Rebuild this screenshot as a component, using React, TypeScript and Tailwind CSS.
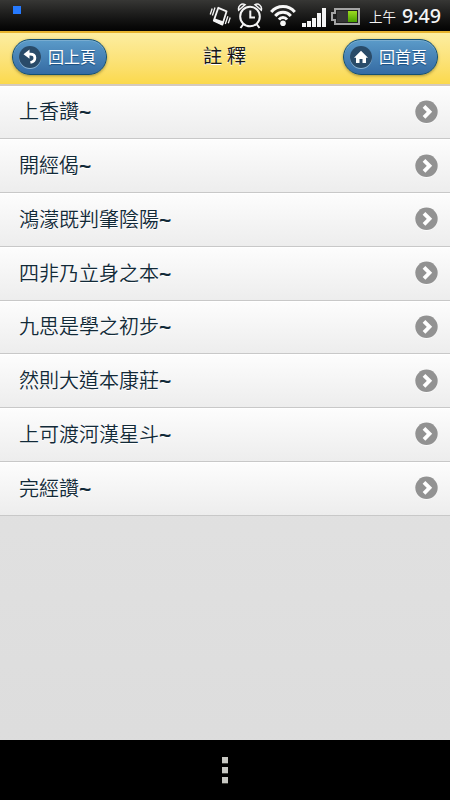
import React from 'react';

const rows = [
  '上香讚',
  '開經偈',
  '鴻濛既判肇陰陽',
  '四非乃立身之本',
  '九思是學之初步',
  '然則大道本康莊',
  '上可渡河漢星斗',
  '完經讚',
];

function VibrateIcon() {
  return (
    <svg width="22" height="24" viewBox="0 0 22 24" className="mt-1 shrink-0" fill="none" stroke="#f4f4f4">
      <path d="M9.3 3.8 L17.6 7.3 L13.4 20.6 L4.8 16.6 Z" strokeWidth="1.8" strokeLinejoin="round" />
      <path d="M6 14.5 L14.8 17.6 L13.6 21.2 L4.5 17 Z" fill="#f4f4f4" stroke="none" />
      <path d="M6 3.5 L3.4 11.5 M3.2 4.5 L1.2 10.5 M18.9 12.3 L16.3 20 M21.2 13.5 L19.3 19.3" strokeWidth="1.3" />
    </svg>
  );
}

function AlarmIcon() {
  return (
    <svg width="26" height="28" viewBox="0 0 26 28" className="mt-[2px] shrink-0" fill="none" stroke="#f5f5f5" strokeWidth="2">
      <circle cx="13" cy="14.5" r="9.8" />
      <path d="M13.3 8.5 V15.5 H18" />
      <path d="M1.7 8.2 C.6 4 4.5 1 8 2.6 Z M24.3 8.2 C25.4 4 21.5 1 18 2.6 Z" strokeWidth="1.5" />
      <path d="M6.5 22 L3.5 26 M19.5 22 L22.5 26" />
    </svg>
  );
}

function WifiIcon() {
  return (
    <svg width="26" height="23" viewBox="0 0 26 23" className="mt-1 shrink-0" fill="none" stroke="#f7f7f7" strokeWidth="3">
      <path d="M1.2 8 C7.5 .7 18.5 .7 24.8 8" />
      <path d="M5.2 12 C9.5 7.1 16.5 7.1 20.8 12" />
      <path d="M9 15.7 C11 12.9 15 12.9 17 15.7" />
      <circle cx="13" cy="19.2" r="2.8" fill="#f7f7f7" stroke="none" />
    </svg>
  );
}

function SignalIcon() {
  return (
    <svg width="24" height="20" viewBox="0 0 24 20" className="mt-[7px] shrink-0" fill="#f5f5f5">
      <path d="M0 16h4v4H0zM5 14h4v6H5zM10 11h4v9h-4zM15 6h4v14h-4zM20 1h4v19h-4z" />
    </svg>
  );
}

function BatteryIcon() {
  return (
    <svg width="29" height="17" viewBox="0 0 29 17" className="mt-2 shrink-0">
      <defs>
        <linearGradient id="charge" x1="0" y1="0" x2="0" y2="1">
          <stop offset="0" stopColor="#9ddb21" />
          <stop offset="1" stopColor="#49a000" />
        </linearGradient>
      </defs>
      <path d="M4 1H28V16H4V12H1V5H4Z" fill="#202020" stroke="#a4a4a4" strokeWidth="2" />
      <path d="M6 3H17V14H6Z" fill="#363636" />
      <path d="M17 3H26V14H17Z" fill="url(#charge)" />
    </svg>
  );
}

function StatusBar() {
  return (
    <header className="flex h-[31px] shrink-0 bg-linear-to-b from-[#373735] to-[#040404] text-[#f5f5f5]">
      <span className="ml-[13px] mt-[6px] size-[8px] bg-[#267aff]" />
      <div className="ml-[188px] flex">
        <VibrateIcon />
        <span className="w-[6px]" />
        <AlarmIcon />
        <span className="w-[7px]" />
        <WifiIcon />
        <span className="w-[6px]" />
        <SignalIcon />
        <span className="w-[5px]" />
        <BatteryIcon />
      </div>
      <span className="ml-[9px] mt-[8px] whitespace-nowrap font-['Noto_Sans_CJK_TC',sans-serif] text-[13.5px] font-[350] leading-[16px]">上午</span>
      <span className="ml-[6px] mt-[2px] origin-left scale-x-[.96] whitespace-nowrap font-['Noto_Sans',sans-serif] text-[20.5px] font-medium leading-[26px]">9:49</span>
    </header>
  );
}

function PillButton({ label, children }: { label: string; children: React.ReactNode }) {
  return (
    <button className="flex h-[36px] w-[95px] items-center rounded-full border border-[#145072] bg-linear-to-b from-[#5b9bc9] to-[#356ba3] pl-[6px] shadow-[inset_0_1px_0_#78acd0,0_1px_3px_#60501a88]">
      <span className="flex size-[22px] shrink-0 items-center justify-center rounded-full bg-[#294b69] shadow-[0_1px_0_#8eb5d4]">
        {children}
      </span>
      <span className="ml-[7px] -mt-[2px] whitespace-nowrap font-['Noto_Sans_CJK_TC',sans-serif] text-[16px] leading-[24px] text-white [text-shadow:0_1px_1px_#194b7d]">{label}</span>
    </button>
  );
}

function TitleBar() {
  return (
    <div className="flex h-[54.5px] shrink-0 items-center justify-between border-t-2 border-t-[#e6b22d] border-b-2 border-b-[#d5cabe] bg-linear-to-b from-[#fceda0] to-[#fbd94b] px-[12px] pb-[2px]">
      <PillButton label="回上頁">
        <svg width="14" height="16" viewBox="0 0 14 16" fill="none" stroke="white" strokeWidth="2.8">
          <path d="M3 5.2 H7.2 C13.4 5.2 13.4 12.2 7.4 13.5" />
          <path d="M6.5 .5 V9.8 L.5 5.2 Z" fill="white" stroke="none" />
        </svg>
      </PillButton>
      <h1 className="-mt-[4px] -ml-px whitespace-pre font-['Noto_Sans_CJK_TC',sans-serif] text-[19.5px] font-normal leading-[28px] text-[#171717] [text-shadow:0_1px_0_white]">註 釋</h1>
      <PillButton label="回首頁">
        <svg width="14" height="14" viewBox="0 0 14 14" fill="white">
          <path d="M7 .7 L14 7.7 H12 V13 H8.5 V9 H5.5 V13 H2 V7.7 H0 Z" />
        </svg>
      </PillButton>
    </div>
  );
}

function ListRow({ label }: { label: string }) {
  return (
    <li className="flex h-[53.75px] items-center border-b border-[#c8c8c8] bg-linear-to-b from-[#fdfdfd] to-[#ededed] pl-[19px] pr-[12px] shadow-[inset_0_1px_0_white]">
      <span className="flex-1 font-['Noto_Sans_CJK_TC',sans-serif] text-[20px] font-[350] leading-[28px] text-[#122a38] [text-shadow:0_1px_0_white]">
        {label}<span className="inline-block origin-left scale-x-[1.08] font-['Noto_Sans',sans-serif] font-bold">~</span>
      </span>
      <svg width="23" height="24" viewBox="0 0 23 24" className="shrink-0">
        <circle cx="11.5" cy="12.8" r="11" fill="white" />
        <circle cx="11.5" cy="11.8" r="11.2" fill="#929292" />
        <path d="M9 6.3 L14.5 11.8 L9 17.3" fill="none" stroke="white" strokeWidth="3.8" />
      </svg>
    </li>
  );
}

export default function App() {
  return (
    <main className="flex h-[800px] w-[450px] flex-col overflow-hidden bg-linear-to-b from-[#e8e8e8] to-[#dcdcdc]">
      <StatusBar />
      <TitleBar />
      <ul className="shrink-0">
        {rows.map((label) => <ListRow key={label} label={label} />)}
      </ul>
      <footer className="mt-auto flex h-[60px] shrink-0 flex-col items-center gap-[4px] bg-black pt-[17px]">
        {[0, 1, 2].map((dot) => <span key={dot} className="size-[6px] bg-[#c8c8c2] shadow-[0_1px_0_#44443f]" />)}
      </footer>
    </main>
  );
}
